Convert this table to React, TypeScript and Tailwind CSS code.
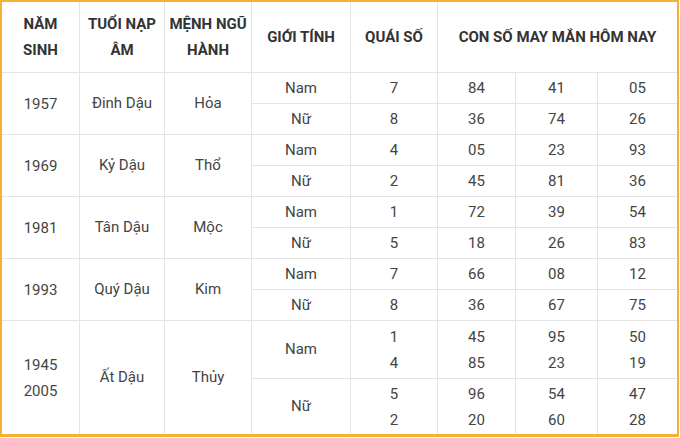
import React from "react";

type Group = {
  year: string[];
  tuoi: string;
  menh: string;
  rows: { g: string; q: string[]; n: string[][] }[];
};

const groups: Group[] = [
  { year: ["1957"], tuoi: "Đinh Dậu", menh: "Hỏa", rows: [
    { g: "Nam", q: ["7"], n: [["84"], ["41"], ["05"]] },
    { g: "Nữ", q: ["8"], n: [["36"], ["74"], ["26"]] },
  ] },
  { year: ["1969"], tuoi: "Kỷ Dậu", menh: "Thổ", rows: [
    { g: "Nam", q: ["4"], n: [["05"], ["23"], ["93"]] },
    { g: "Nữ", q: ["2"], n: [["45"], ["81"], ["36"]] },
  ] },
  { year: ["1981"], tuoi: "Tân Dậu", menh: "Mộc", rows: [
    { g: "Nam", q: ["1"], n: [["72"], ["39"], ["54"]] },
    { g: "Nữ", q: ["5"], n: [["18"], ["26"], ["83"]] },
  ] },
  { year: ["1993"], tuoi: "Quý Dậu", menh: "Kim", rows: [
    { g: "Nam", q: ["7"], n: [["66"], ["08"], ["12"]] },
    { g: "Nữ", q: ["8"], n: [["36"], ["67"], ["75"]] },
  ] },
  { year: ["1945", "2005"], tuoi: "Ất Dậu", menh: "Thủy", rows: [
    { g: "Nam", q: ["1", "4"], n: [["45", "85"], ["95", "23"], ["50", "19"]] },
    { g: "Nữ", q: ["5", "2"], n: [["96", "20"], ["54", "60"], ["47", "28"]] },
  ] },
];

const cell = "bg-white flex flex-col items-center justify-center text-center";

function Lines({ items }: { items: string[] }) {
  return (
    <>
      {items.map((t, i) => (
        <span key={i} className="leading-[26px]">{t}</span>
      ))}
    </>
  );
}

export default function App() {
  return (
    <div className="w-[680px] h-[438px] bg-white font-['Roboto',sans-serif]">
      <div className="w-[679px] h-[437px] border-l-2 border-t-2 border-r-2 border-b-[3px] border-[#f5b133]">
        <div className="grid grid-cols-[77px_84px_86px_98px_86px_77px_81px_79px] grid-rows-[70px_30px_30px_30px_30px_30px_30px_30px_30px_57px_55px] gap-px bg-[#e4e4e4] w-[675px] h-[432px] text-[15px] text-[#444]">
          <div className={`${cell} font-bold text-[#333] leading-[26px]`}>NĂM<br />SINH</div>
          <div className={`${cell} font-bold text-[#333] leading-[26px]`}>TUỔI NẠP<br />ÂM</div>
          <div className={`${cell} font-bold text-[#333] leading-[26px]`}>MỆNH NGŨ<br />HÀNH</div>
          <div className={`${cell} font-bold text-[#333]`}>GIỚI TÍNH</div>
          <div className={`${cell} font-bold text-[#333]`}>QUÁI SỐ</div>
          <div className={`${cell} col-span-3 font-bold text-[#333]`}>CON SỐ MAY MẮN HÔM NAY</div>
          {groups.map((gr, gi) => (
            <React.Fragment key={gi}>
              <div className={`${cell} row-span-2`}><Lines items={gr.year} /></div>
              <div className={`${cell} row-span-2`}>{gr.tuoi}</div>
              <div className={`${cell} row-span-2`}>{gr.menh}</div>
              {gr.rows.map((r, ri) => (
                <React.Fragment key={ri}>
                  <div className={cell}>{r.g}</div>
                  <div className={cell}><Lines items={r.q} /></div>
                  {r.n.map((n, ni) => (
                    <div key={ni} className={cell}><Lines items={n} /></div>
                  ))}
                </React.Fragment>
              ))}
            </React.Fragment>
          ))}
        </div>
      </div>
    </div>
  );
}
